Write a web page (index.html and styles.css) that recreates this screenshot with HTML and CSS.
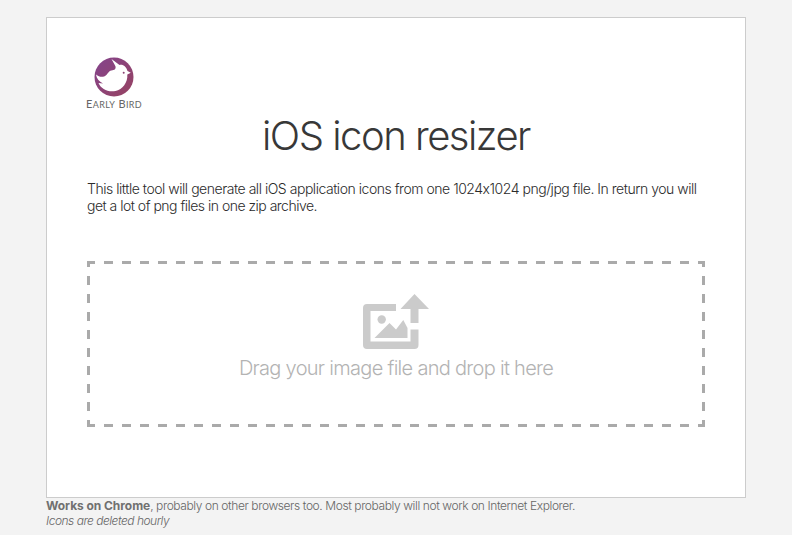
FILE: index.html
```html
<!DOCTYPE html>
<html lang="en">
<head>
<meta charset="utf-8">
<title>iOS icon resizer</title>
<link rel="stylesheet" href="styles.css">
</head>
<body>
<div class="page">
  <main class="card">
    <div class="logo">
      <svg class="bird" width="40" height="40" viewBox="0 0 40 40">
        <defs><linearGradient id="plum" x2="1" y2="1"><stop offset="0" stop-color="#83438c"/><stop offset="1" stop-color="#974361"/></linearGradient></defs>
        <circle cx="20" cy="20" r="19.500" fill="url(#plum)"/>
        <path fill="#fff" d="M17.500 2L25.500 8C29 7 32.500 10 33.500 14L36.800 15.800L33.300 17.500C34 25.500 28.500 32.500 21.500 34C14 35.500 7 32 4.500 26L9 26.500C5 24.500 2.500 21.500 2 17.500C5.500 20.500 9.500 20.500 12 18.300C14.500 16 15 13.500 18.500 13.300C21.500 13 22.500 10.500 20.800 8Z"/>
        <circle cx="29.700" cy="15.700" r="1" fill="#8b4273"/>
      </svg>
      <div class="brand">E<span>ARLY</span> B<span>IRD</span></div>
    </div>
    <h1>iOS icon resizer</h1>
    <p class="intro"><span class="line-one">This little tool will generate all iOS application icons from one 1024x1024 png/jpg file. In return you will</span><br><span class="line-two">get a lot of png files in one zip archive.</span></p>
    <div class="drop">
      <svg class="upload" width="66" height="56" viewBox="0 0 66 56">
        <path fill="#cbcbcb" d="M33 10H4Q0 10 0 14V51Q0 55 4 55H51.500Q55.500 55 55.500 51V35.500H47.500V47.500H7.500V17H33ZM51.500 0L66 15H55.500V29H47.500V15H37.500Z"/>
        <circle cx="18.700" cy="25.500" r="4.200" fill="#cbcbcb"/>
        <path fill="#cbcbcb" d="M11.500 44L26.500 29L33 35.500L40.300 26L44.500 34V44Z"/>
      </svg>
      <div class="hint">Drag your image file and drop it here</div>
    </div>
  </main>
  <footer><div class="support"><b>Works on Chrome</b><span>, probably on other browsers too. Most probably will not work on Internet Explorer.</span></div><i>Icons are deleted hourly</i></footer>
</div>
</body>
</html>
```
FILE: styles.css
```css
* { box-sizing: border-box; }
body {
  margin: 0;
  background: #f3f3f3;
  color: #2b2b2b;
  font-family: Inter, "Liberation Sans", sans-serif;
  font-weight: 300;
  white-space: nowrap;
  overflow: hidden;
}
.page { width: 700px; margin: 17px auto 0; }
.card {
  height: 481px;
  padding: 39px 40px 0;
  background: #fff;
  border: 1px solid #ccc;
}
.logo { width: 56px; height: 54px; }
.bird { display: block; margin-left: 7px; }
.brand {
  font: 11px/13px Lato, sans-serif;
  color: #666;
  margin: 0 0 0 -1px;
  letter-spacing: 0.35px;
}
.brand span { font-size: 9px; }
h1 {
  margin: 0;
  height: 48px;
  padding-top: 1px;
  text-align: center;
  font-size: 40px;
  line-height: 48px;
  font-weight: 300;
  letter-spacing: -1.5px;
  color: #383838;
}
.intro {
  margin: 21px 0 0;
  height: 36px;
  font-size: 14px;
  line-height: 17px;
  font-weight: 300;
}
.line-one { letter-spacing: -0.47px; }
.line-two { letter-spacing: -0.51px; }
.drop {
  --dash: #aaa 0 9px, transparent 9px 18px;
  display: flex;
  flex-direction: column;
  align-items: center;
  height: 166px;
  margin-top: 45px;
  padding-top: 33px;
  background:
    repeating-linear-gradient(90deg, var(--dash)) -1px 0 / 620px 3px no-repeat,
    repeating-linear-gradient(90deg, var(--dash)) -1px 100% / 620px 3px no-repeat,
    repeating-linear-gradient(180deg, var(--dash)) 0 -3px / 3px 170px no-repeat,
    repeating-linear-gradient(180deg, var(--dash)) 100% -3px / 3px 170px no-repeat;
}
.upload { display: block; }
.hint {
  margin-top: 5px;
  font-size: 20px;
  line-height: 26px;
  letter-spacing: -0.7px;
  color: #b3b3b3;
}
footer { font-size: 12px; line-height: 15px; color: #666; }
footer b { font-weight: 700; letter-spacing: -0.05px; color: #707070; }
.support { letter-spacing: -0.4px; }
footer i { display: block; letter-spacing: -0.49px; }
```
